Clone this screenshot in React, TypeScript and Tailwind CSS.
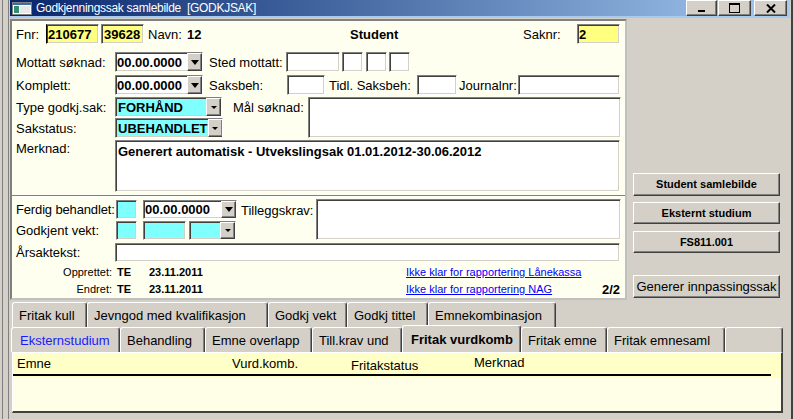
import type { ReactNode } from "react"

const sunken =
  "border border-t-[#808080] border-l-[#808080] border-b-white border-r-white shadow-[inset_1px_1px_0_#404040,inset_-1px_-1px_0_#d4d0c8]"
const raised =
  "bg-[#d4d0c8] border border-t-white border-l-white border-b-[#404040] border-r-[#404040] shadow-[inset_-1px_-1px_0_#808080]"

function Box({ className = "", children }: { className?: string; children?: ReactNode }) {
  return <div className={`${sunken} flex shrink-0 items-center overflow-hidden ${className}`}>{children}</div>
}

function Arrow({ big }: { big?: boolean }) {
  return (
    <div className={`${raised} ml-auto flex h-full w-[15px] shrink-0 items-center justify-center`}>
      {big ? (
        <svg width="8" height="5" viewBox="0 0 8 5">
          <path d="M0 0h8L4 5z" fill="#000" />
        </svg>
      ) : (
        <svg width="6" height="3" viewBox="0 0 6 3">
          <path d="M0 0h6L3 3z" fill="#000" />
        </svg>
      )}
    </div>
  )
}

function Tab({ className = "", children }: { className?: string; children?: ReactNode }) {
  return (
    <div
      className={`flex h-[25px] shrink-0 items-start whitespace-nowrap rounded-t-[3px] border-t border-l border-white border-r border-r-[#404040] bg-[#d4d0c8] pl-[6px] pt-[6px] shadow-[inset_-1px_0_0_#808080] ${className}`}>
      {children}
    </div>
  )
}

function SideButton({ className = "", children }: { className?: string; children?: ReactNode }) {
  return (
    <div className={`${raised} flex w-[147px] items-center justify-center ${className}`}>{children}</div>
  )
}

export default function App() {
  return (
    <div className="flex h-[419px] w-[793px] overflow-hidden bg-[#d4d0c8] font-['Liberation_Sans',Arial,sans-serif] text-[13px] leading-none text-black">
      {/* outer frame on the left */}
      <div className="flex w-[10px] shrink-0">
        <div className="ml-[2px] w-px bg-[#808080]" />
        <div className="ml-[5px] w-px bg-[#808080]" />
      </div>

      <div className="flex w-[780px] flex-col">
        {/* title bar */}
        <div className="flex h-[16px] items-center bg-linear-to-r from-[#0a246a] to-[#a6caf0]">
          <svg className="ml-[2px]" width="20" height="13" viewBox="0 0 20 13">
            <rect x="0.5" y="0.5" width="19" height="12" fill="#fff" stroke="#808080" />
            <rect x="1" y="1" width="18" height="2" fill="#3a6ea5" />
            <rect x="2" y="4" width="5" height="7" fill="#2f8f6f" />
            <rect x="8" y="4" width="10" height="7" fill="#e8e8e8" />
          </svg>
          <span className="ml-[4px] whitespace-pre text-[12px] tracking-[-0.3px] text-white">
            Godkjenningssak samlebilde  [GODKJSAK]
          </span>
          <div className="ml-auto flex h-full items-stretch pr-[3px]">
            <div className={`${raised} flex w-[31px] items-end justify-center pb-[3px]`}>
              <div className="h-[2px] w-[7px] bg-black" />
            </div>
            <div className={`${raised} ml-px flex w-[33px] items-center justify-center`}>
              <div className="h-[10px] w-[11px] border border-t-2 border-black" />
            </div>
            <div className={`${raised} ml-[3px] flex w-[33px] items-center justify-center`}>
              <svg width="10" height="9" viewBox="0 0 10 9">
                <path d="M1 0.5L9 8.5M9 0.5L1 8.5" stroke="#000" strokeWidth="2" />
              </svg>
            </div>
          </div>
        </div>
        <div className="h-[2px] bg-[#a6caf0]" />

        <div className="mt-px flex">
          {/* main form panel */}
          <div className="flex h-[281px] w-[617px] shrink-0 flex-col whitespace-nowrap border-2 border-t-[#808080] border-l-[#808080] border-r-[#c0c0c0] border-b-[#c0c0c0] bg-[#fffff0] pl-[4px] pr-[5px]">
            {/* row 1 */}
            <div className="mt-[3px] flex h-[20px] items-center">
              <div className="flex w-[334px] items-center">
                <span className="w-[30px]">Fnr:</span>
                <Box className="h-[20px] w-[53px] bg-[#ffff80] border-l-black">
                  <span className="pl-[1px] font-bold">210677</span>
                </Box>
                <Box className="ml-[2px] h-[20px] w-[43px] bg-[#ffff80]">
                  <span className="pl-[2px] font-bold">39628</span>
                </Box>
                <span className="ml-[4px]">Navn:</span>
                <span className="ml-[5px] font-bold">12</span>
              </div>
              <span className="w-[173px] font-bold">Student</span>
              <span className="w-[54px]">Saknr:</span>
              <Box className="h-[20px] w-[43px] bg-[#ffff80]">
                <span className="pl-[1px] font-bold">2</span>
              </Box>
            </div>

            {/* row 2 */}
            <div className="mt-[8px] flex h-[20px] items-center">
              <span className="w-[99px] shrink-0">Mottatt søknad:</span>
              <Box className="h-[20px] w-[88px] bg-white">
                <span className="pl-[1px] font-bold">00.00.0000</span>
                <Arrow big />
              </Box>
              <span className="ml-[6px] w-[77px] shrink-0">Sted mottatt:</span>
              <Box className="h-[20px] w-[54px] bg-white" />
              <Box className="ml-[2px] h-[20px] w-[21px] bg-white" />
              <Box className="ml-[3px] h-[20px] w-[21px] bg-white" />
              <Box className="ml-[2px] h-[20px] w-[21px] bg-white" />
            </div>

            {/* row 3 */}
            <div className="mt-[3px] flex h-[20px] items-center">
              <span className="w-[99px] shrink-0">Komplett:</span>
              <Box className="h-[20px] w-[88px] bg-white">
                <span className="pl-[1px] font-bold">00.00.0000</span>
                <Arrow big />
              </Box>
              <span className="ml-[6px] w-[78px] shrink-0">Saksbeh:</span>
              <Box className="h-[20px] w-[38px] bg-white" />
              <span className="ml-[4px] w-[88px] shrink-0">Tidl. Saksbeh:</span>
              <Box className="h-[20px] w-[40px] bg-white" />
              <span className="ml-[2px] w-[59px] shrink-0">Journalnr:</span>
              <Box className="h-[20px] w-[102px] bg-white" />
            </div>

            {/* rows 4-5 */}
            <div className="mt-[2px] flex h-[41px]">
              <div className="flex w-[217px] shrink-0 flex-col">
                <div className="flex h-[20px] items-center">
                  <span className="w-[99px] shrink-0">Type godkj.sak:</span>
                  <Box className="h-[20px] w-[107px] bg-[#80ffff]">
                    <span className="pl-[2px] font-bold">FORHÅND</span>
                    <Arrow />
                  </Box>
                </div>
                <div className="mt-px flex h-[20px] items-center">
                  <span className="w-[99px] shrink-0">Sakstatus:</span>
                  <Box className="h-[20px] w-[108px] bg-[#80ffff]">
                    <span className="pl-[2px] font-bold">UBEHANDLET</span>
                    <Arrow />
                  </Box>
                </div>
              </div>
              <span className="w-[75px] shrink-0 pt-[4px]">Mål søknad:</span>
              <Box className="h-[41px] w-[313px] bg-white" />
            </div>

            {/* row 6 */}
            <div className="mt-[2px] flex h-[52px]">
              <span className="w-[99px] shrink-0 pt-[2px]">Merknad:</span>
              <Box className="h-[52px] w-[505px] items-start bg-white">
                <span className="pl-[2px] pt-[4px] font-bold">Generert automatisk - Utvekslingsak 01.01.2012-30.06.2012</span>
              </Box>
            </div>

            {/* separator */}
            <div className="-ml-[4px] -mr-[5px] mt-[3px] h-[2px] border-t border-t-[#808080] border-b border-b-white" />

            {/* rows 7-8 */}
            <div className="mt-[2px] flex h-[41px]">
              <div className="flex w-[224px] shrink-0 flex-col">
                <div className="mt-px flex h-[19px] items-center">
                  <span className="w-[100px] shrink-0 tracking-[-0.15px]">Ferdig behandlet:</span>
                  <Box className="h-[19px] w-[21px] bg-[#80ffff]" />
                  <Box className="ml-[6px] h-[19px] w-[94px] bg-white">
                    <span className="pl-[1px] font-bold">00.00.0000</span>
                    <Arrow big />
                  </Box>
                </div>
                <div className="mt-[2px] flex h-[19px] items-center">
                  <span className="w-[100px] shrink-0">Godkjent vekt:</span>
                  <Box className="h-[19px] w-[21px] bg-[#80ffff]" />
                  <Box className="ml-[6px] h-[19px] w-[43px] bg-[#80ffff]" />
                  <Box className="ml-[3px] h-[19px] w-[47px] bg-[#80ffff]">
                    <Arrow />
                  </Box>
                </div>
              </div>
              <span className="ml-px w-[75px] shrink-0 pt-[5px]">Tilleggskrav:</span>
              <Box className="h-[41px] w-[305px] bg-white" />
            </div>

            {/* row 9 */}
            <div className="mt-[3px] flex h-[19px] items-center">
              <span className="w-[99px] shrink-0">Årsaktekst:</span>
              <Box className="h-[19px] w-[505px] bg-white" />
            </div>

            {/* rows 10-11 */}
            <div className="mt-[4px] flex h-[13px] items-center text-[11px]">
              <span className="w-[96px] shrink-0 text-right">Opprettet:</span>
              <span className="ml-[5px] w-[32px] shrink-0 font-bold">TE</span>
              <span className="w-[257px] shrink-0 font-bold">23.11.2011</span>
              <span className="text-[#0000ff] underline">Ikke klar for rapportering Lånekassa</span>
            </div>
            <div className="mt-[4px] flex h-[13px] items-center text-[11px]">
              <span className="w-[96px] shrink-0 text-right">Endret:</span>
              <span className="ml-[5px] w-[32px] shrink-0 font-bold">TE</span>
              <span className="w-[257px] shrink-0 font-bold">23.11.2011</span>
              <span className="text-[#0000ff] underline">Ikke klar for rapportering NAG</span>
              <span className="ml-auto text-[13px] font-bold">2/2</span>
            </div>
          </div>

          {/* right column buttons */}
          <div className="flex flex-col pl-[6px] text-[11px] font-bold">
            <SideButton className="mt-[154px] h-[23px]">Student samlebilde</SideButton>
            <SideButton className="mt-[6px] h-[22px]">Eksternt studium</SideButton>
            <SideButton className="mt-[7px] h-[22px]">FS811.001</SideButton>
            <SideButton className="mt-[22px] h-[23px] border-black text-[13px] font-normal">Generer innpassingssak</SideButton>
          </div>
        </div>

        {/* tabs row 1 */}
        <div className="mt-[2px] flex h-[25px] pl-[2px]">
          <Tab className="w-[75px]">Fritak kull</Tab>
          <Tab className="w-[181px]">Jevngod med kvalifikasjon</Tab>
          <Tab className="w-[79px]">Godkj vekt</Tab>
          <Tab className="w-[81px]">Godkj tittel</Tab>
          <Tab className="w-[128px]">Emnekombinasjon</Tab>
        </div>
        {/* tabs row 2 */}
        <div className="flex h-[25px] items-end pl-px">
          <Tab className="w-[109px] pl-[8px] text-[#1a1aff]">Eksternstudium</Tab>
          <Tab className="w-[85px]">Behandling</Tab>
          <Tab className="w-[107px]">Emne overlapp</Tab>
          <Tab className="w-[90px]">Till.krav und</Tab>
          <Tab className="relative h-[27px] w-[119px] pl-[8px] pt-[7px] font-bold">Fritak vurdkomb</Tab>
          <Tab className="w-[86px]">Fritak emne</Tab>
          <Tab className="w-[118px]">Fritak emnesaml</Tab>
          <Tab className="w-[58px]" />
        </div>

        {/* tab content */}
        <div className="ml-[2px] flex h-[61px] w-[771px] flex-col border-t border-l border-t-white border-l-white border-r-2 border-b-2 border-r-[#404040] border-b-[#404040] bg-[#ffffe8]">
          <div className="flex h-[25px] flex-col bg-[#ffffc8]">
            <div className="flex h-[21px] items-center">
              <span className="ml-[4px] w-[215px]">Emne</span>
              <span className="w-[119px]">Vurd.komb.</span>
              <span className="w-[123px] pt-[3px]">Fritakstatus</span>
              <span className="-mt-[3px]">Merknad</span>
            </div>
            <div className="h-[2px] w-[758px] bg-black" />
          </div>
        </div>
      </div>

      {/* outer frame on the right */}
      <div className="flex w-[3px] shrink-0 justify-end">
        <div className="w-[2px] bg-[#404040]" />
      </div>
    </div>
  )
}
